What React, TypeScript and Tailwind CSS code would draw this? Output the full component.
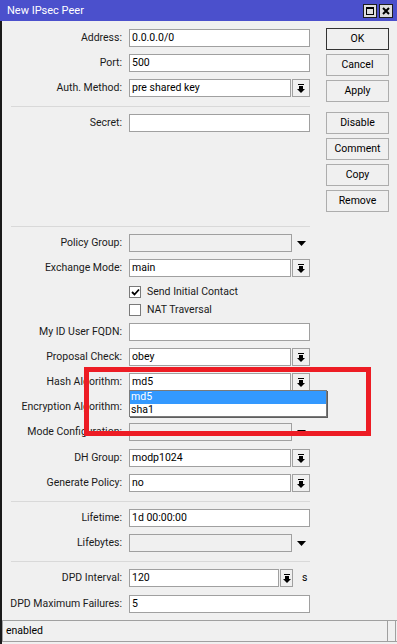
import React from "react";

const DropIcon = () => (
  <svg width="8" height="9" viewBox="0 0 8 9" shapeRendering="crispEdges">
    <rect x="1" y="0" width="6" height="1" fill="#000" />
    <rect x="2" y="2" width="4" height="3" fill="#000" />
    <polygon points="0,5 8,5 4,9" fill="#000" shapeRendering="auto" />
  </svg>
);

const PlainArrow = () => (
  <svg width="9" height="5" viewBox="0 0 9 5">
    <polygon points="0,0 9,0 4.5,5" fill="#000" />
  </svg>
);

function Label({ text }: { text: string }) {
  return <div className="w-[120px] shrink-0 text-right whitespace-nowrap text-[#1b1b1b]">{text}</div>;
}

function Field({ w, value, disabled }: { w: string; value?: string; disabled?: boolean }) {
  return (
    <div
      className={`${w} h-[18px] border border-[#a0a0a0] ${disabled ? "bg-[#f0f0f0]" : "bg-white"} pl-[2px] flex items-center whitespace-nowrap overflow-hidden text-black`}
    >
      {value}
    </div>
  );
}

function DropBtn({ w }: { w: string }) {
  return (
    <div className={`${w} h-[18px] ml-[1px] border border-[#a0a0a0] bg-[#f0f0f0] flex items-center justify-center`}>
      <DropIcon />
    </div>
  );
}

function Row({ label, mt, children }: { label: string; mt: string; children: React.ReactNode }) {
  return (
    <div className={`flex items-center h-[18px] ${mt}`}>
      <Label text={label} />
      <div className="ml-[7px] flex items-center">{children}</div>
    </div>
  );
}

function Sep({ mt }: { mt: string }) {
  return <div className={`${mt} ml-[9px] w-[299px] h-px bg-[#d9d9d9]`} />;
}

function Check({ checked, label, mt }: { checked?: boolean; label: string; mt: string }) {
  return (
    <div className={`flex items-center h-[12px] ml-[127px] ${mt}`}>
      <div className="w-[12px] h-[12px] border border-[#7a7a7a] bg-white flex items-center justify-center">
        {checked && (
          <svg width="9" height="8" viewBox="0 0 9 8">
            <path d="M1 4 L3.5 6.5 L8 1.5" stroke="#000" strokeWidth="1.8" fill="none" />
          </svg>
        )}
      </div>
      <div className="ml-[6px] whitespace-nowrap text-[#1b1b1b]">{label}</div>
    </div>
  );
}

function Btn({ text, mt, primary }: { text: string; mt: string; primary?: boolean }) {
  return (
    <div
      className={`${mt} h-[22px] w-[63px] border ${primary ? "border-[#333333]" : "border-[#adadad]"} bg-[#f0f0f0] flex items-center justify-center text-black`}
    >
      {text}
    </div>
  );
}

export default function App() {
  return (
    <div className="w-[397px] h-[644px] bg-[#f0f0f0] relative overflow-hidden font-['Roboto',sans-serif] text-[10.5px] leading-none">
      {/* Title bar */}
      <div className="h-[21px] bg-[#4b50cc] flex items-center justify-between">
        <div className="pl-[7px] text-white text-[11px]">New IPsec Peer</div>
        <div className="flex gap-[2px] pr-[4px]">
          <div className="w-[14px] h-[14px] border border-[#1e1e1e] bg-[#dedede] flex items-center justify-center">
            <div className="w-[8px] h-[8px] border border-black border-t-2" />
          </div>
          <div className="w-[14px] h-[14px] border border-[#1e1e1e] bg-[#dedede] flex items-center justify-center">
            <svg width="8" height="8" viewBox="0 0 8 8">
              <path d="M1 1 L7 7 M7 1 L1 7" stroke="#000" strokeWidth="2" />
            </svg>
          </div>
        </div>
      </div>

      {/* Body */}
      <div className="h-[623px] border-l-2 border-[#1a1a1a] flex flex-col">
        <div className="flex">
          <div className="w-[314px] flex flex-col pt-[8px]">
            <Row label="Address:" mt="mt-0">
              <Field w="w-[181px]" value="0.0.0.0/0" />
            </Row>
            <Row label="Port:" mt="mt-[7px]">
              <Field w="w-[181px]" value="500" />
            </Row>
            <Row label="Auth. Method:" mt="mt-[7px]">
              <Field w="w-[162px]" value="pre shared key" />
              <DropBtn w="w-[18px]" />
            </Row>
            <Sep mt="mt-[9px]" />
            <Row label="Secret:" mt="mt-[7px]">
              <Field w="w-[181px]" />
            </Row>
            <Sep mt="mt-[94px]" />
            <Row label="Policy Group:" mt="mt-[7px]">
              <Field w="w-[163px]" disabled />
              <div className="ml-[5px]">
                <PlainArrow />
              </div>
            </Row>
            <Row label="Exchange Mode:" mt="mt-[7px]">
              <Field w="w-[162px]" value="main" />
              <DropBtn w="w-[18px]" />
            </Row>
            <Check checked label="Send Initial Contact" mt="mt-[9px]" />
            <Check label="NAT Traversal" mt="mt-[6px]" />
            <Row label="My ID User FQDN:" mt="mt-[7px]">
              <Field w="w-[181px]" />
            </Row>
            <Row label="Proposal Check:" mt="mt-[7px]">
              <Field w="w-[162px]" value="obey" />
              <DropBtn w="w-[18px]" />
            </Row>
            <Row label="Hash Algorithm:" mt="mt-[7px]">
              <Field w="w-[162px]" value="md5" />
              <DropBtn w="w-[18px]" />
            </Row>
            <Row label="Encryption Algorithm:" mt="mt-[7px]">
              <Field w="w-[162px]" />
              <DropBtn w="w-[18px]" />
            </Row>
            <Row label="Mode Configuration:" mt="mt-[7px]">
              <Field w="w-[163px]" disabled />
              <div className="ml-[5px]">
                <PlainArrow />
              </div>
            </Row>
            <Row label="DH Group:" mt="mt-[8px]">
              <Field w="w-[162px]" value="modp1024" />
              <DropBtn w="w-[18px]" />
            </Row>
            <Row label="Generate Policy:" mt="mt-[7px]">
              <Field w="w-[162px]" value="no" />
              <DropBtn w="w-[18px]" />
            </Row>
            <Sep mt="mt-[9px]" />
            <Row label="Lifetime:" mt="mt-[7px]">
              <Field w="w-[181px]" value="1d 00:00:00" />
            </Row>
            <Row label="Lifebytes:" mt="mt-[7px]">
              <Field w="w-[163px]" disabled />
              <div className="ml-[5px]">
                <PlainArrow />
              </div>
            </Row>
            <Sep mt="mt-[9px]" />
            <Row label="DPD Interval:" mt="mt-[7px]">
              <Field w="w-[150px]" value="120" />
              <DropBtn w="w-[13px]" />
              <div className="ml-[9px] text-black">s</div>
            </Row>
            <Row label="DPD Maximum Failures:" mt="mt-[8px]">
              <Field w="w-[181px]" value="5" />
            </Row>
          </div>
          <div className="ml-[10px] w-[63px] flex flex-col pt-[7px]">
            <Btn text="OK" mt="mt-0" primary />
            <Btn text="Cancel" mt="mt-[4px]" />
            <Btn text="Apply" mt="mt-[4px]" />
            <Btn text="Disable" mt="mt-[10px]" />
            <Btn text="Comment" mt="mt-[4px]" />
            <Btn text="Copy" mt="mt-[4px]" />
            <Btn text="Remove" mt="mt-[4px]" />
          </div>
        </div>

        {/* Status bar */}
        <div className="mt-[7px] h-[22px] flex border-y border-[#a0a0a0]">
          <div className="w-[386px] border-x border-[#a0a0a0] pl-[3px] flex items-center text-black">enabled</div>
          <div className="w-[8px] border-r border-[#a0a0a0]" />
        </div>
      </div>

      {/* Dropdown list overlay */}
      <div className="absolute left-[129px] top-[390px] w-[198px] h-[27px] bg-white border border-[#7a7a7a] shadow-[1px_1px_0_#5e5e5e] flex flex-col">
        <div className="h-[13px] bg-[#3399ff] text-white pl-[1px] flex items-center">md5</div>
        <div className="h-[12px] text-black pl-[1px] flex items-center">sha1</div>
      </div>

      {/* Red highlight box */}
      <div className="absolute left-[84px] top-[367px] w-[287px] h-[69px] border-[5px] border-[#ed1c24]" />
    </div>
  );
}
